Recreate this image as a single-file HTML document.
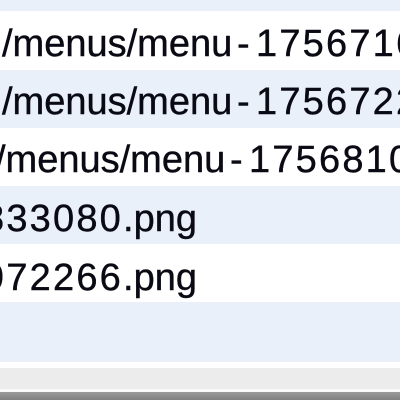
<!DOCTYPE html>
<html><head><style>
html,body{margin:0;padding:0;width:400px;height:400px;overflow:hidden;background:#fff}
.b{position:absolute;left:0;width:400px}
.t{position:absolute;font-family:"Liberation Sans",sans-serif;font-size:38px;line-height:38px;color:#0a0a14;white-space:nowrap;-webkit-text-stroke:0.4px #0a0a14}
.d{letter-spacing:2.2px}
</style></head><body>
<div class="b" style="top:0;height:11px;background:#eaf0fa"></div>
<div class="b" style="top:11px;height:59px;background:#fff"></div>
<div class="b" style="top:70px;height:58px;background:#eaf0fa"></div>
<div class="b" style="top:128px;height:58px;background:#fff"></div>
<div class="b" style="top:186px;height:58px;background:#eaf0fa"></div>
<div class="b" style="top:244px;height:58px;background:#fff"></div>
<div class="b" style="top:302px;height:60px;background:#eaf0fa"></div>
<div class="b" style="top:362px;height:6px;background:#fff"></div>
<div class="b" style="top:368px;height:21px;background:#ececec"></div>
<div class="b" style="top:389px;height:3px;background:#fafafa"></div>
<div class="b" style="top:392px;height:8px;background:linear-gradient(#9a9a9a,#808080)"></div>

<div class="t" style="left:2px;top:25px">/menus/menu</div>
<div class="t" style="left:237px;top:25px">-</div>
<div class="t d" style="left:256px;top:25px">1756716</div>

<div class="t" style="left:2px;top:83px">/menus/menu</div>
<div class="t" style="left:237px;top:83px">-</div>
<div class="t d" style="left:256px;top:83px">1756722</div>

<div class="t" style="left:-5px;top:141px">/menus/menu</div>
<div class="t" style="left:230px;top:141px">-</div>
<div class="t d" style="left:249px;top:141px">17568109</div>

<div class="t" style="left:-17px;top:200px"><span class="d">833080</span>.png</div>
<div class="t" style="left:-17px;top:259px"><span class="d">972266</span>.png</div>
</body></html>
